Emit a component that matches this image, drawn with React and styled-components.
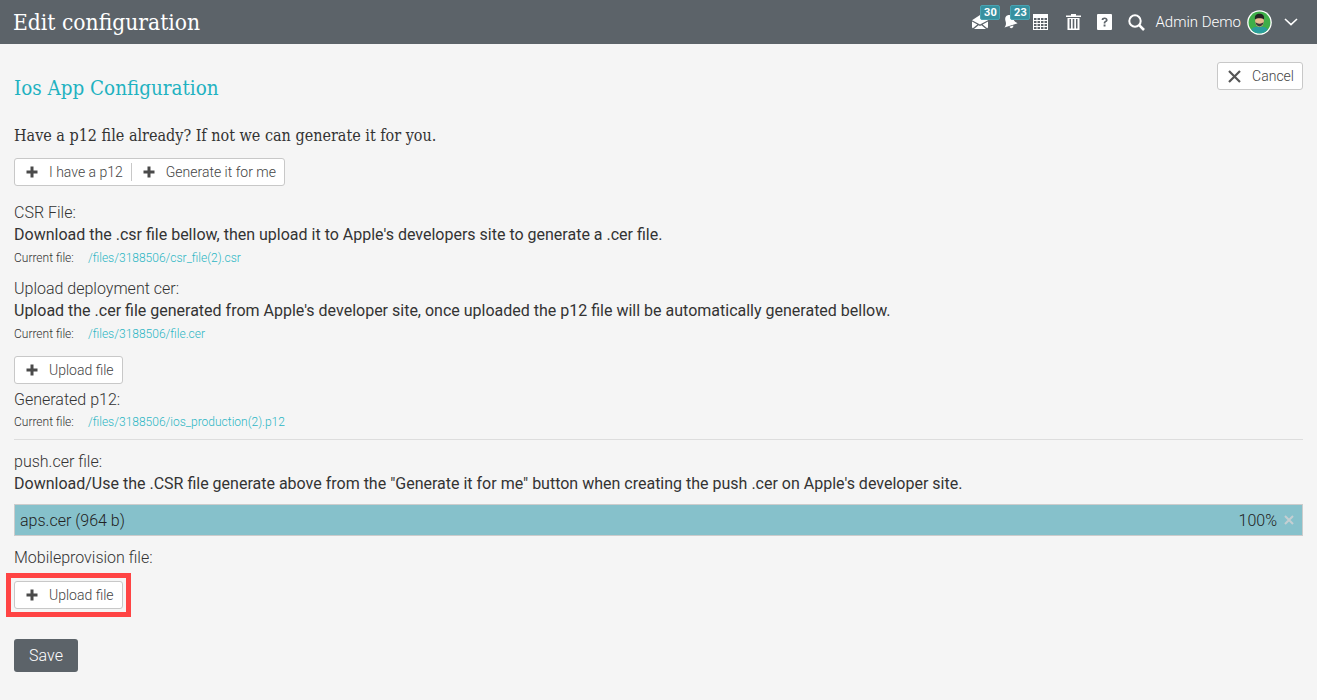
import styled, { createGlobalStyle } from "styled-components";

const GlobalStyle = createGlobalStyle`
  html, body {
    margin: 0;
    padding: 0;
    background: #f5f5f5;
    color: #333;
    font-family: Roboto, "Liberation Sans", sans-serif;
    font-weight: 300;
  }
  * { box-sizing: border-box; }
`;

const SLAB = `"DejaVu Serif Condensed", "DejaVu Serif", serif`;

const Page = styled.div`
  width: 1317px;
  height: 700px;
  overflow: hidden;
`;

const Header = styled.header`
  height: 44px;
  background: #5c6369;
  display: flex;
  align-items: center;
  padding: 0 8px 0 13px;
  color: #fff;
`;

const PageTitle = styled.h1`
  margin: 0;
  font-family: ${SLAB};
  font-size: 22.6px;
  font-weight: 400;
  flex: 1;
`;

const IconBar = styled.div`
  display: flex;
  align-items: center;
`;

const IconSlot = styled.div`
  position: relative;
  width: ${({ $w }) => $w}px;
  height: 24px;
  display: flex;
  align-items: center;
  justify-content: center;
`;

const Badge = styled.span`
  position: absolute;
  top: -5px;
  left: ${({ $left }) => $left}px;
  width: 20px;
  height: 15px;
  border-radius: 2px;
  background: #37909f;
  border: 1px solid #4aa3b2;
  color: #fff;
  font-size: 11px;
  font-weight: 700;
  line-height: 13px;
  text-align: center;
`;

const UserName = styled.span`
  font-size: 15px;
  font-weight: 300;
  margin: 0 6px 0 2px;
`;

const Main = styled.main`
  padding: 18px 14px 0;
`;

const TitleRow = styled.div`
  display: flex;
  justify-content: space-between;
  align-items: flex-start;
  height: 65px;
`;

const SectionTitle = styled.h2`
  margin: 13px 0 0;
  font-family: ${SLAB};
  font-size: 20.4px;
  font-weight: 400;
  line-height: 26px;
  color: #1fb2c1;
`;

const Lead = styled.p`
  margin: 0 0 13px;
  font-family: ${SLAB};
  font-size: 16px;
  font-weight: 400;
  line-height: 18px;
  color: #333;
`;

const Button = styled.button`
  display: inline-flex;
  align-items: center;
  height: 28px;
  padding: 0 8px 0 ${({ $tight }) => ($tight ? 10 : 11)}px;
  background: #fff;
  border: 1px solid #c8c8c8;
  border-radius: 3px;
  color: #444;
  font-family: Roboto, sans-serif;
  font-size: 14px;
  font-weight: 300;
  svg { margin-right: 11px; }
`;

const ButtonGroup = styled.div`
  display: inline-flex;
  align-items: center;
  height: 28px;
  background: #fff;
  border: 1px solid #c8c8c8;
  border-radius: 3px;
  font-size: 14px;
  color: #444;
`;

const GroupItem = styled.span`
  display: flex;
  align-items: center;
  height: 18px;
  padding: 0 8px 0 11px;
  border-left: ${({ $first }) => ($first ? "none" : "1px solid #c8c8c8")};
  svg { margin-right: 11px; }
`;

const Block = styled.div`
  margin-top: ${({ $mt }) => $mt || 0}px;
`;

const Line = styled.div`
  font-size: 16px;
  line-height: 22px;
  font-weight: ${({ $strong }) => ($strong ? 400 : 300)};
  color: #333;
`;

const FileRow = styled.div`
  display: flex;
  font-size: 12px;
  line-height: 22px;
  margin-top: ${({ $mt }) => $mt ?? 1}px;
  color: #333;
  font-weight: 300;
`;

const FileLabel = styled.span`
  width: 74px;
`;

const FileLink = styled.a`
  color: #2cb6c4;
  font-weight: 300;
`;

const Divider = styled.hr`
  border: 0;
  border-top: 1px solid #ddd;
  margin: 6px 0 11px;
`;

const ProgressBar = styled.div`
  height: 32px;
  margin-top: 9px;
  background: #86c1cb;
  border: 1px solid #ccc;
  display: flex;
  align-items: center;
  justify-content: space-between;
  padding: 0 8px 0 5px;
  font-size: 16px;
  font-weight: 300;
  color: #222;
`;

const Percent = styled.span`
  display: flex;
  align-items: center;
  gap: 7px;
`;

const Highlight = styled.div`
  display: inline-flex;
  margin-top: 12px;
  outline: 5px solid #ff4444;
  outline-offset: 3px;
`;

const SaveButton = styled.button`
  display: block;
  margin-top: 30px;
  width: 64px;
  height: 33px;
  background: #5c6369;
  border: 0;
  border-radius: 3px;
  color: #fff;
  font-family: Roboto, sans-serif;
  font-size: 16px;
  font-weight: 300;
`;

const PlusIcon = () => (
  <svg width="12" height="12" viewBox="0 0 12 12">
    <path d="M4.5 0.5h3v4h4v3h-4v4h-3v-4h-4v-3h4z" fill="#4a4a4a" />
  </svg>
);

const MailIcon = () => (
  <svg width="16" height="14" viewBox="0 0 16 14" fill="#fff">
    <path d="M0 5.2 L8 0 L16 5.2 L8 9.6 Z" />
    <path d="M0 6.6 L5.4 9.6 L0.8 13.2 C0.3 13 0 12.6 0 12 Z M16 6.6 L10.6 9.6 L15.2 13.2 C15.7 13 16 12.6 16 12 Z M6.6 10.2 L8 11 L9.4 10.2 L14 14 H2 Z" />
  </svg>
);

const BellIcon = () => (
  <svg width="16" height="14" viewBox="0 0 16 14" fill="#fff">
    <g transform="rotate(-18 8 7)">
      <path d="M8 0 C11 0 12 2.5 12 5 C12 8 13.4 9.4 15 10.6 H1 C2.6 9.4 4 8 4 5 C4 2.5 5 0 8 0 Z" />
      <path d="M6 11.4 H10 A2 2 0 0 1 6 11.4 Z" />
    </g>
  </svg>
);

const CalendarIcon = () => (
  <svg width="15" height="16" viewBox="0 0 15 16">
    <rect width="15" height="16" fill="#fff" />
    {[1, 4.5, 8, 11.5].map((x) =>
      [4, 7, 10, 13].map((y) => (
        <rect key={`${x}-${y}`} x={x} y={y} width="2.5" height="2" fill="#5c6369" />
      ))
    )}
  </svg>
);

const TrashIcon = () => (
  <svg width="15" height="16" viewBox="0 0 15 16" fill="#fff">
    <path d="M5 0 H10 V1.5 H15 V3 H0 V1.5 H5 Z" />
    <path d="M1.5 4 H13.5 V16 H1.5 Z M3.5 5 V14.5 H5 V5 Z M6.7 5 V14.5 H8.3 V5 Z M10 5 V14.5 H11.5 V5 Z" fillRule="evenodd" />
  </svg>
);

const HelpIcon = () => (
  <svg width="15" height="16" viewBox="0 0 15 16">
    <rect width="15" height="16" rx="1" fill="#fff" />
    <path d="M4.6 5.9 C4.7 4.2 5.9 3.5 7.6 3.5 C9.4 3.5 10.6 4.4 10.6 5.9 C10.6 7 10 7.5 9.2 8 C8.6 8.4 8.4 8.7 8.4 9.5 H6.7 C6.7 8.3 7 7.7 7.9 7.1 C8.5 6.7 8.8 6.4 8.8 5.9 C8.8 5.3 8.3 5 7.6 5 C6.9 5 6.5 5.4 6.4 6 Z M6.6 10.5 H8.5 V12.5 H6.6 Z" fill="#5c6369" />
  </svg>
);

const SearchIcon = () => (
  <svg width="17" height="17" viewBox="0 0 17 17" fill="none" stroke="#fff">
    <circle cx="7" cy="7" r="5.7" strokeWidth="2" />
    <path d="M11.2 11.2 L16 16" strokeWidth="2.6" />
  </svg>
);

const ChevronIcon = () => (
  <svg width="14" height="8" viewBox="0 0 14 8" fill="none" stroke="#fff" strokeWidth="1.6">
    <path d="M1 1 L7 6.6 L13 1" />
  </svg>
);

const Avatar = () => (
  <svg width="25" height="25" viewBox="0 0 26 26">
    <circle cx="13" cy="13" r="12.8" fill="#fff" />
    <circle cx="13" cy="13" r="11.4" fill="#3fae49" />
    <path d="M4.5 20.5 C6 17.5 9.5 17.5 13 17.5 C16.5 17.5 20 17.5 21.5 20.5 A11.4 11.4 0 0 1 4.5 20.5 Z" fill="#2a9d9d" />
    <ellipse cx="13" cy="11.5" rx="4.6" ry="6" fill="#e8b98f" />
    <path d="M8.3 10 C7.6 5.5 10 4 13 4 C16 4 18.4 5.5 17.7 10 C16 8 10 8 8.3 10 Z" fill="#222" />
    <path d="M8.6 12 C9.5 18.8 16.5 18.8 17.4 12 C16.5 15 9.5 15 8.6 12 Z" fill="#3a3a3a" />
  </svg>
);

const CloseIcon = () => (
  <svg width="13" height="13" viewBox="0 0 13 13" stroke="#555" strokeWidth="2.2">
    <path d="M1 1 L12 12 M12 1 L1 12" />
  </svg>
);

const RemoveIcon = () => (
  <svg width="10" height="10" viewBox="0 0 10 10" stroke="#c5cfd2" strokeWidth="2">
    <path d="M1 1 L9 9 M9 1 L1 9" />
  </svg>
);

export default function App() {
  return (
    <Page>
      <GlobalStyle />
      <Header>
        <PageTitle>Edit configuration</PageTitle>
        <IconBar>
          <IconSlot $w={32}>
            <MailIcon />
            <Badge $left={16}>30</Badge>
          </IconSlot>
          <IconSlot $w={28}>
            <BellIcon />
            <Badge $left={14}>23</Badge>
          </IconSlot>
          <IconSlot $w={33}>
            <CalendarIcon />
          </IconSlot>
          <IconSlot $w={33}>
            <TrashIcon />
          </IconSlot>
          <IconSlot $w={29}>
            <HelpIcon />
          </IconSlot>
          <IconSlot $w={34}>
            <SearchIcon />
          </IconSlot>
          <UserName>Admin Demo</UserName>
          <Avatar />
          <IconSlot $w={37}>
            <ChevronIcon />
          </IconSlot>
        </IconBar>
      </Header>
      <Main>
        <TitleRow>
          <SectionTitle>Ios App Configuration</SectionTitle>
          <Button $tight>
            <CloseIcon />
            Cancel
          </Button>
        </TitleRow>
        <Lead>Have a p12 file already? If not we can generate it for you.</Lead>
        <ButtonGroup>
          <GroupItem $first>
            <PlusIcon />I have a p12
          </GroupItem>
          <GroupItem>
            <PlusIcon />
            Generate it for me
          </GroupItem>
        </ButtonGroup>
        <Block $mt={16}>
          <Line>CSR File:</Line>
          <Line $strong>Download the .csr file bellow, then upload it to Apple's developers site to generate a .cer file.</Line>
          <FileRow>
            <FileLabel>Current file:</FileLabel>
            <FileLink>/files/3188506/csr_file(2).csr</FileLink>
          </FileRow>
        </Block>
        <Block $mt={9}>
          <Line>Upload deployment cer:</Line>
          <Line $strong>Upload the .cer file generated from Apple's developer site, once uploaded the p12 file will be automatically generated bellow.</Line>
          <FileRow>
            <FileLabel>Current file:</FileLabel>
            <FileLink>/files/3188506/file.cer</FileLink>
          </FileRow>
        </Block>
        <Block $mt={11}>
          <Button>
            <PlusIcon />
            Upload file
          </Button>
        </Block>
        <Block $mt={5}>
          <Line>Generated p12:</Line>
        </Block>
        <FileRow $mt={0}>
          <FileLabel>Current file:</FileLabel>
          <FileLink>/files/3188506/ios_production(2).p12</FileLink>
        </FileRow>
        <Divider />
        <Line>push.cer file:</Line>
        <Line $strong>Download/Use the .CSR file generate above from the "Generate it for me" button when creating the push .cer on Apple's developer site.</Line>
        <ProgressBar>
          <span>aps.cer (964 b)</span>
          <Percent>
            100%
            <RemoveIcon />
          </Percent>
        </ProgressBar>
        <Block $mt={11}>
          <Line>Mobileprovision file:</Line>
        </Block>
        <Highlight>
          <Button>
            <PlusIcon />
            Upload file
          </Button>
        </Highlight>
        <SaveButton>Save</SaveButton>
      </Main>
    </Page>
  );
}
